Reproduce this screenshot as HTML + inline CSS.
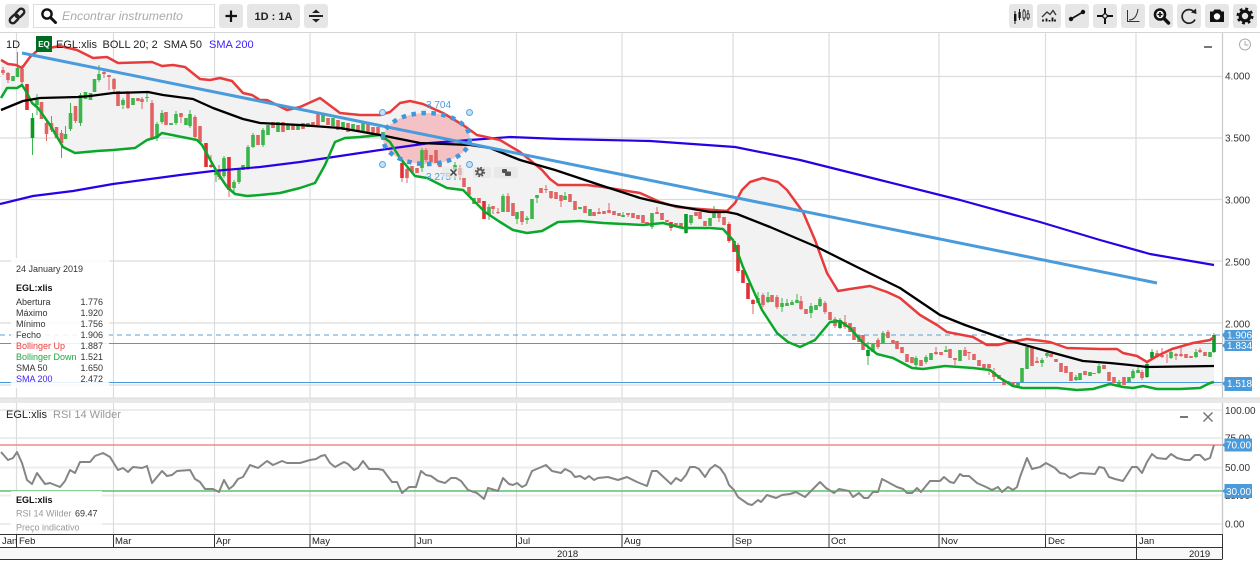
<!DOCTYPE html>
<html>
<head>
<meta charset="utf-8">
<title>EGL:xlis</title>
<style>
html,body{margin:0;padding:0;background:#fff;width:1260px;height:561px;overflow:hidden}
svg{display:block;font-family:"Liberation Sans",sans-serif}
text{font-family:"Liberation Sans",sans-serif}
</style>
</head>
<body>
<svg width="1260" height="561" viewBox="0 0 1260 561" xmlns="http://www.w3.org/2000/svg">
<rect width="1260" height="561" fill="#fff"/>

<!-- toolbar -->
<g fill="#e6e6e6">
<rect x="5" y="4" width="24" height="24" rx="3"/>
<rect x="219" y="4" width="24" height="24" rx="3"/>
<rect x="247" y="4" width="53" height="24" rx="3"/>
<rect x="304" y="4" width="24" height="24" rx="3"/>
<rect x="1009" y="4" width="24" height="24" rx="3"/>
<rect x="1037" y="4" width="24" height="24" rx="3"/>
<rect x="1065" y="4" width="24" height="24" rx="3"/>
<rect x="1093" y="4" width="24" height="24" rx="3"/>
<rect x="1121" y="4" width="24" height="24" rx="3"/>
<rect x="1149" y="4" width="24" height="24" rx="3"/>
<rect x="1177" y="4" width="24" height="24" rx="3"/>
<rect x="1205" y="4" width="24" height="24" rx="3"/>
<rect x="1233" y="4" width="24" height="24" rx="3"/>
</g>
<rect x="33.5" y="4.5" width="181" height="23" fill="#fff" stroke="#ddd"/>
<rect x="0" y="32" width="1260" height="1" fill="#d5d5d5"/>

<!-- link icon -->
<g transform="rotate(-45 17 16)" fill="none" stroke="#222" stroke-width="2.400">
<rect x="8" y="13" width="10" height="6" rx="3"/>
<rect x="16" y="13" width="10" height="6" rx="3"/>
</g>
<!-- search -->
<circle cx="47" cy="14" r="4.6" fill="none" stroke="#111" stroke-width="2.4"/>
<path d="M50.5 17.5L55.5 22.5" stroke="#111" stroke-width="3" stroke-linecap="round"/>
<text x="62" y="20" font-size="12.3" font-style="italic" fill="#aaa">Encontrar instrumento</text>
<!-- plus -->
<path d="M231 10.5V22M225.5 16H237" stroke="#111" stroke-width="2.2" fill="none"/>
<text x="273.5" y="20" font-size="11" font-weight="bold" fill="#222" text-anchor="middle">1D : 1A</text>
<!-- split -->
<path d="M309 16H323" stroke="#222" stroke-width="2"/>
<path d="M312 13L316 9.5L320 13ZM312 19L316 22.5L320 19Z" fill="#222"/>

<!-- right icons -->
<g stroke="#111" fill="#111">
<path d="M1015 11V24M1019.5 9V20M1024 9V21M1028 10V20" stroke-width="1" fill="none"/>
<rect x="1014" y="14" width="2.4" height="7" stroke="none"/>
<rect x="1018.5" y="12" width="2.2" height="6" stroke="none"/>
<rect x="1023" y="11" width="2.2" height="7" fill="#fff" stroke-width=".8"/>
<rect x="1027" y="14" width="2.2" height="4" fill="#fff" stroke-width=".8"/>
</g>
<path d="M1042 17L1047 12L1050 14.5L1053 10.5L1056 15" fill="none" stroke="#333" stroke-width="1.3"/>
<path d="M1043 19.500V21.500M1046.500 18.500V21.500M1049.500 20V21.500M1052.500 17.500V21.500M1055 19.500V21.500" stroke="#111" stroke-width="1.8"/>
<path d="M1071 19L1083 12" stroke="#111" stroke-width="1.6"/>
<circle cx="1071" cy="19" r="2.2" fill="#111"/><circle cx="1083" cy="12" r="2.2" fill="#111"/>
<path d="M1105 8V13.500M1105 18.500V24M1097 16H1102.500M1107.500 16H1113" stroke="#111" stroke-width="2"/>
<circle cx="1105" cy="16" r="2.2" fill="none" stroke="#111" stroke-width="1.2"/>
<path d="M1127.500 10V21.500H1139.500" fill="none" stroke="#333" stroke-width="1"/>
<path d="M1129 20C1134 20 1137 16 1138 9" fill="none" stroke="#333" stroke-width="1"/>
<circle cx="1160" cy="14.500" r="5" fill="#fff" stroke="#111" stroke-width="2.6"/>
<path d="M1160 12V17M1157.500 14.500H1162.500" stroke="#111" stroke-width="1.6"/>
<path d="M1164 18.500L1168.500 23" stroke="#111" stroke-width="3.4" stroke-linecap="round"/>
<path d="M1194.500 12.500A6.800 6.800 0 1 0 1195 19.500" fill="none" stroke="#222" stroke-width="1.7"/>
<path d="M1191 12.500L1196 8.500L1196.500 14Z" fill="#222"/>
<path d="M1210 11.500H1213L1214.500 9.500H1220L1221.500 11.500H1224V22H1210Z" fill="#111"/>
<circle cx="1217" cy="16.500" r="3.200" fill="#fff"/>
<circle cx="1245" cy="16" r="4.800" fill="none" stroke="#111" stroke-width="3.200"/>
<circle cx="1245" cy="16" r="7" fill="none" stroke="#111" stroke-width="3" stroke-dasharray="2.750 2.750"/>

<!-- main grid -->
<g stroke="#dcdcdc" stroke-width="1.2" fill="none">
<path d="M0 76.500H1222M0 138H1222M0 199.500H1222M0 261H1222M0 323H1222M0 385H1222"/>
<path d="M16.500 33V398M113.500 33V398M214.500 33V398M310 33V398M415 33V398M516.500 33V398M622 33V398M733 33V398M829 33V398M939 33V398M1045.500 33V398M1136 33V398"/>
</g>
<path d="M1222.500 33V534" stroke="#c8c8c8" stroke-width="1.200"/>

<!-- band fill -->
<polygon fill="#f2f2f2" points="1,60 8,64 16,65 22,68 30,57 38,50 60,46 77,50 93,58 107,57 118,63 152,62 162,66 173,65 185,67 200,79 210,80 220,78 232,81 243,93 252,95 260,100 267,100 287,110 300,107 320,98 340,113 360,115 380,115 390,112 400,103 410,101 423,104 443,113 463,125 477,135 500,140 520,152 530,160 542,170 550,179 558,185 587,185 603,187 640,193 660,202 677,207 700,209 727,211 735,203 742,190 750,182 763,178 778,182 787,190 803,212 815,240 827,273 838,291 850,289 870,286 887,292 900,298 920,315 937,325 947,332 973,337 987,345 998,345 1010,342 1027,339 1050,342 1067,348 1100,349 1117,349 1123,353 1137,356 1147,362 1157,356 1172,349 1193,343 1210,340 1214,337 1214,382 1210,383 1200,388 1180,389 1157,389 1143,386 1133,388 1123,387 1110,384 1093,389 1077,390 1057,388 1023,388 1013,386 1000,378 990,370 973,368 945,366 923,369 912,368 893,358 877,354 863,343 850,328 840,321 830,322 815,340 800,347 788,342 777,333 762,310 743,267 733,240 723,229 710,228 683,228 663,223 643,225 603,223 580,221 558,222 542,231 527,233 513,230 500,222 485,212 470,197 463,190 447,188 427,178 415,176 400,158 390,142 380,135 360,137 345,138 335,142 325,165 315,183 300,188 280,193 260,195 247,196 235,194 227,187 217,172 202,145 197,140 177,136 162,133 157,137 147,140 135,148 113,150 97,151 75,153 63,147 50,125 38,108 32,103 27,93 22,85 17,88 7,88 1,98"/>

<!-- horizontal markers -->
<path d="M0 335H1222" stroke="#3f92d4" stroke-width="1" stroke-dasharray="5 4" opacity=".85"/>
<path d="M0 343.500H1222" stroke="#4a9bdc" stroke-width="1"/>
<path d="M0 382.500H1222" stroke="#4a9bdc" stroke-width="1"/>

<!-- ellipse fill -->
<ellipse cx="426.500" cy="138.500" rx="43.500" ry="25.500" fill="#f5b9bd" opacity=".85"/>

<!-- candle wicks -->
<path fill="none" stroke="#3cb54a" stroke-width="1" d="M17.500 52V77M32.500 113V155M37 94V115M65.500 126V139M70.500 103V131M80.500 93V126M99 65V82M123 98V109M147 93V102M157 122V141M162 110V124M176 111V125M190 110V128M216 168V182M224 156V178M234 180V194M239 168V184M248 145V170M253 133V148M263 128V147M422 148V172M455 162V180M489 204V220M503 194V212M517 212V224M527 216V224M537 195V203M565 192V200M623 212V217M652 213V229M686 214V234M691 215V225M714 206V218M758 292V303M768 292V303M782 298V312M787 299V306M792 300V305M797 294V303M811 303V318M820 297V307M840 318V329M868 342V365M883 331V344M916 356V367M926 355V364M946 346V352M1042 358V367M1047 350V358M1076 375V381M1099 364V374M1119 380V387M1133 369V379M1138 365V373M1147 362V378M1152 349V359M1171 350V359M1196 349V358M1214 333V353"/>
<path fill="none" stroke="#e06464" stroke-width="1" d="M3 67V75M8 72V83M22 65V84M46.500 119V141M51.500 116V132M61.500 130V158M75.500 106V123M104 70V78M109 75V90M114 78V93M128 91V109M142 97V109M152 100V140M181 113V123M195 115V139M211 155V168M219 165V180M229 157V197M402 160V182M407 165V183M426 148V162M460 165V180M493 206V214M498 208V214M508 193V212M522 211V225M546 185V193M551 191V199M561 195V207M599 208V214M609 203V213M628 213V217M657 207V214M671 222V231M719 212V222M729 222V243M738 243V273M753 299V314M763 293V307M777 295V309M801 296V310M825 301V314M835 317V328M845 315V329M878 338V349M888 330V338M936 347V355M955 358V365M965 347V356M969 352V360M989 364V375M994 368V381M1037 357V363M1142 370V380M1157 350V358M1162 348V358M1167 354V363M1176 353V360M1181 346V357M1200 348V353"/>

<!-- candle bodies -->
<path fill="none" stroke="#e06464" stroke-width="3.600" d="M3 70V73M8 73V80M22 69V82M41.500 102V119M46.500 123V134M51.500 123V130M56.500 127V138M61.500 133V143M75.500 106V121M104 72V74M109 75V77M114 79V89M118 91V106M128 93V108M138 98V101M142 99V102M152 103V138M166 112V125M181 113V117M195 117V137M200 126V142M219 170V177M258 135V145M273 122V128M283 122V132M293 125V130M303 123V129M313 122V127M318 112V125M328 118V125M338 120V130M348 123V132M358 125V132M368 122V132M373 127V133M378 127V135M407 169V178M412 166V172M417 168V173M426 150V160M431 155V162M436 150V163M440 162V167M460 168V175M464 178V187M469 187V195M479 198V203M493 206V209M498 212V213M508 196V212M513 203V216M522 211V222M541 188V193M546 189V190M551 191V198M556 192V199M561 195V201M570 194V202M575 201V210M585 206V213M594 212V216M599 212V214M604 211V214M609 210V213M614 211V215M619 213V216M628 213V215M633 213V218M638 215V219M643 215V223M647 222V225M657 212V214M662 213V220M667 220V222M676 223V225M681 223V227M696 212V216M700 212V219M705 221V226M719 213V218M724 217V225M763 295V305M772 295V302M777 297V307M801 301V309M806 309V314M825 303V312M830 312V320M835 319V326M845 322V327M850 323V332M854 327V340M859 335V342M863 335V350M878 340V347M888 332V338M893 340V343M897 341V349M902 347V353M907 354V362M912 357V363M921 360V366M936 352V354M941 352V355M950 349V358M955 358V360M965 350V356M969 352V353M974 354V360M979 360V366M984 364V368M989 364V368M994 372V377M999 375V379M1004 380V385M1008 381V383M1013 382V387M1032 347V366M1037 361V363M1051 354V357M1056 359V362M1061 363V372M1066 366V373M1071 372V381M1085 371V375M1094 373V374M1104 365V369M1109 372V381M1114 377V383M1124 377V385M1142 372V378M1157 353V357M1162 355V357M1176 354V356M1181 354V356M1186 354V358M1191 356V358M1200 350V352M1205 352V356"/>
<path fill="none" stroke="#e22f34" stroke-width="3.600" d="M27 84V110M206 143V167M211 165V167M229 157V190M402 163V178M484 201V219M671 222V228M729 224V241M734 241V252M738 245V271M743 270V283M748 283V299M753 300V304"/>
<path fill="none" stroke="#3cb54a" stroke-width="3.600" d="M13 76V81M17.500 68V77M37 100V105M65.500 134V139M70.500 113V129M80.500 95V123M85.500 92V99M90.500 93V100M94.500 79V92M99 74V80M123 100V105M133 98V105M147 97V98M157 124V138M162 113V122M171 123V125M176 114V123M186 118V125M190 114V126M216 170V175M224 158V176M234 182V188M239 170V182M243 165V170M248 147V168M253 135V147M263 130V145M268 125V135M278 122V132M288 124V130M298 124V130M308 123V127M323 115V122M333 118V126M343 122V130M353 124V130M363 123V131M383 132V140M422 150V168M455 165V170M474 198V204M489 207V215M503 196V212M517 212V219M527 218V220M532 199V219M537 195V198M565 196V200M580 207V209M590 209V216M623 215V217M652 213V227M662 213V214M691 215V223M710 218V226M714 213V218M758 298V303M768 297V302M782 303V307M787 303V306M792 302V305M797 300V303M811 306V313M816 305V310M820 299V306M873 343V352M883 333V343M916 358V365M926 357V362M931 353V360M946 350V352M960 350V361M1018 383V387M1022 368V382M1027 347V369M1042 360V363M1047 353V356M1076 377V380M1080 373V380M1090 372V376M1099 366V373M1119 382V386M1129 377V382M1133 371V378M1138 370V373M1171 352V358M1196 352V357M1210 352V357"/>
<path fill="none" stroke="#0a9a28" stroke-width="3.600" d="M32.500 118V138M686 214V233M840 320V328M868 350V356M1147 364V377M1152 352V358M1214 335V352"/>

<!-- indicators -->
<polyline fill="none" stroke="#2a00e6" stroke-width="2.200" stroke-linejoin="round" points="0,204 33,196 73,191 113,184 180,175 213,171 260,167 300,162 380,150 430,143 470,140 510,137 560,139 650,141 735,147 800,160 880,180 960,200 1040,222 1100,240 1150,254 1214,265"/>
<polyline fill="none" stroke="#0aa82a" stroke-width="2.500" stroke-linejoin="round" points="1,98 7,88 17,88 22,85 27,93 32,103 38,108 50,125 63,147 75,153 97,151 113,150 135,148 147,140 157,137 162,133 177,136 197,140 202,145 217,172 227,187 235,194 247,196 260,195 280,193 300,188 315,183 325,165 335,142 345,138 360,137 380,135 390,142 400,158 415,176 427,178 447,188 463,190 470,197 485,212 500,222 513,230 527,233 542,231 558,222 580,221 603,223 643,225 663,223 683,228 710,228 723,229 733,240 743,267 762,310 777,333 788,342 800,347 815,340 830,322 840,321 850,328 863,343 877,354 893,358 912,368 923,369 945,366 973,368 990,370 1000,378 1013,386 1023,388 1057,388 1077,390 1093,389 1110,384 1123,387 1133,388 1143,386 1157,389 1180,389 1200,388 1210,383 1214,382"/>
<polyline fill="none" stroke="#e83c3c" stroke-width="2.500" stroke-linejoin="round" points="1,60 8,64 16,65 22,68 30,57 38,50 60,46 77,50 93,58 107,57 118,63 152,62 162,66 173,65 185,67 200,79 210,80 220,78 232,81 243,93 252,95 260,100 267,100 287,110 300,107 320,98 340,113 360,115 380,115 390,112 400,103 410,101 423,104 443,113 463,125 477,135 500,140 520,152 530,160 542,170 550,179 558,185 587,185 603,187 640,193 660,202 677,207 700,209 727,211 735,203 742,190 750,182 763,178 778,182 787,190 803,212 815,240 827,273 838,291 850,289 870,286 887,292 900,298 920,315 937,325 947,332 973,337 987,345 998,345 1010,342 1027,339 1050,342 1067,348 1100,349 1117,349 1123,353 1137,356 1147,362 1157,356 1172,349 1193,343 1210,340 1214,337"/>
<polyline fill="none" stroke="#000" stroke-width="2.300" stroke-linejoin="round" points="1,110 23,101 40,98 78,97 90,96 113,93 148,92 163,95 193,99 213,108 243,119 260,123 300,125 340,128 380,135 420,143 470,145 490,148 520,160 555,170 603,186 640,198 670,205 710,212 727,212 737,214 770,227 817,247 857,267 900,288 940,315 965,325 1007,340 1050,352 1083,361 1110,363 1130,365 1147,367 1214,366"/>

<!-- trend line -->
<path d="M22 53L1157 283" stroke="#4a9bdc" stroke-width="3" fill="none"/>

<!-- ellipse outline + handles -->
<ellipse cx="426.500" cy="138.500" rx="43.500" ry="25.500" fill="none" stroke="#3f97dc" stroke-width="4.500" stroke-dasharray="4.500 5.500"/>
<g fill="#c5e1f7" stroke="#5aa5e0" stroke-width="1">
<circle cx="382.500" cy="112.500" r="3"/><circle cx="469.500" cy="112.500" r="3"/>
<circle cx="382.500" cy="164.500" r="3"/><circle cx="469.500" cy="164.500" r="3"/>
</g>
<text x="426" y="108" font-size="10" fill="#4a9bdc">3.704</text>
<text x="426" y="180" font-size="10" fill="#4a9bdc">3.275</text>
<rect x="442" y="167" width="22" height="11" rx="2" fill="#e6e6e6" opacity=".6"/>
<rect x="473" y="167" width="18" height="11" rx="2" fill="#e6e6e6" opacity=".8"/>
<rect x="494" y="167" width="24" height="11" rx="2" fill="#e6e6e6" opacity=".8"/>
<path d="M450.500 169.500L456.500 175.500M456.500 169.500L450.500 175.500" stroke="#444" stroke-width="1.500"/>
<circle cx="480" cy="172" r="2.600" fill="none" stroke="#555" stroke-width="2"/>
<circle cx="480" cy="172" r="4.300" fill="none" stroke="#555" stroke-width="1.600" stroke-dasharray="1.700 1.700"/>
<rect x="502" y="169" width="5" height="4" rx="1" fill="#555"/>
<rect x="505" y="171.500" width="6" height="4.500" rx="1" fill="#555"/>

<!-- header -->
<text x="6" y="48" font-size="11" fill="#222">1D</text>
<rect x="36" y="36" width="16" height="16" fill="#006b21"/>
<text x="44" y="47" font-size="8" font-weight="bold" fill="#fff" text-anchor="middle">EQ</text>
<text x="56" y="48" font-size="11" fill="#222">EGL:xlis</text>
<text x="102.500" y="48" font-size="11" fill="#222">BOLL 20; 2</text>
<text x="163.500" y="48" font-size="11" fill="#222">SMA 50</text>
<text x="209" y="48" font-size="11" fill="#3a1cff">SMA 200</text>

<!-- minus, clock -->
<rect x="1204" y="46" width="8" height="2" fill="#777"/>
<circle cx="1245" cy="44.500" r="5.500" fill="none" stroke="#aaa" stroke-width="1"/>
<path d="M1245 41V45H1248.500" fill="none" stroke="#aaa" stroke-width="1"/>

<!-- info panel -->
<rect x="11" y="258" width="98" height="130" fill="#fff" fill-opacity=".87"/>
<g font-size="9" fill="#333">
<text x="16" y="272">24 January 2019</text>
<text x="16" y="291" font-weight="bold" fill="#111">EGL:xlis</text>
<text x="16" y="305">Abertura</text>
<text x="16" y="316">Máximo</text>
<text x="16" y="327">Mínimo</text>
<text x="16" y="338">Fecho</text>
<text x="16" y="349" fill="#e83c3c">Bollinger Up</text>
<text x="16" y="360" fill="#1fa83a">Bollinger Down</text>
<text x="16" y="371">SMA 50</text>
<text x="16" y="382" fill="#3a1cff">SMA 200</text>
<g text-anchor="end">
<text x="103" y="305">1.776</text>
<text x="103" y="316">1.920</text>
<text x="103" y="327">1.756</text>
<text x="103" y="338">1.906</text>
<text x="103" y="349">1.887</text>
<text x="103" y="360">1.521</text>
<text x="103" y="371">1.650</text>
<text x="103" y="382">2.472</text>
</g>
</g>

<!-- price axis -->
<g font-size="10" fill="#333">
<text x="1225" y="79.500">4.000</text>
<text x="1225" y="141.500">3.500</text>
<text x="1225" y="203.500">3.000</text>
<text x="1225" y="265.500">2.500</text>
<text x="1225" y="327.500">2.000</text>
</g>
<path d="M1222 335L1224.500 332V330H1252V340H1224.500V338Z" fill="#4a9bdc"/>
<path d="M1222 345.500L1224.500 343V340.500H1252V351H1224.500V348Z" fill="#4a9bdc"/>
<path d="M1222 383.500L1224.500 381V377H1252V391H1224.500V386Z" fill="#4a9bdc"/>
<g font-size="10" fill="#fff">
<text x="1227" y="338.500">1.906</text>
<text x="1227" y="349">1.834</text>
<text x="1227" y="387">1.518</text>
</g>

<!-- divider -->
<rect x="0" y="398" width="1260" height="5" fill="#e8e8e8"/>
<path d="M0 398H1260" stroke="#ddd" stroke-width="1"/>

<!-- RSI panel -->
<g stroke="#ededed" stroke-width="2" fill="none">
<path d="M0 410H1222M0 438H1222M0 467.500H1222M0 495.500H1222M0 524H1222"/>
</g>
<g stroke="#dcdcdc" stroke-width="1.200" fill="none">
<path d="M16.500 403V534M113.500 403V534M214.500 403V534M310 403V534M415 403V534M516.500 403V534M622 403V534M733 403V534M829 403V534M939 403V534M1045.500 403V534M1136 403V534"/>
</g>
<path d="M1222.500 403V534" stroke="#c8c8c8" stroke-width="1.200"/>
<path d="M0 445H1222" stroke="#f08a8a" stroke-width="1.600"/>
<path d="M0 491H1222" stroke="#5cc46a" stroke-width="1.600"/>
<polyline fill="none" stroke="#858585" stroke-width="2" stroke-linejoin="round" points="1,452 8,460 13,458 17,452 22,463 27,480 32,484 37,473 45,484 50,483 60,487 65,481 70,470 75,473 80,462 90,462 95,456 103,453 110,457 118,470 123,468 128,472 133,467 142,468 147,466 152,483 162,471 167,476 172,475 177,471 190,470 195,479 200,482 205,489 213,489 219,492 224,480 229,489 233,486 238,479 243,477 250,465 258,468 267,461 273,465 282,461 287,463 300,463 310,460 316,459 321,456 325,455 330,463 335,467 344,462 348,464 354,470 358,468 363,461 369,469 378,469 383,470 392,482 397,482 402,493 409,487 416,487 421,471 426,475 431,476 438,481 445,483 451,478 456,478 461,481 468,490 477,493 484,499 488,488 498,491 503,478 509,484 513,485 517,483 522,487 526,485 532,471 546,465 552,471 561,473 565,469 571,472 575,477 580,476 585,479 589,476 594,480 598,478 608,477 618,480 627,477 637,482 647,486 652,471 657,471 671,484 676,478 681,481 686,475 690,467 695,467 699,469 705,477 710,469 715,465 720,468 725,475 729,485 734,490 738,497 748,504 752,505 758,500 761,502 767,495 776,498 782,495 790,494 796,492 805,497 820,482 826,488 834,493 839,489 849,491 853,497 859,493 864,498 868,498 873,492 878,492 882,479 897,487 903,489 907,493 912,493 917,488 921,492 930,481 940,481 944,477 950,482 954,483 960,474 963,476 969,476 977,483 986,487 992,490 998,487 1002,492 1008,487 1013,490 1017,487 1020,477 1027,458 1032,469 1040,467 1046,463 1055,468 1060,473 1065,474 1070,478 1080,473 1095,474 1099,467 1104,468 1109,477 1115,479 1123,481 1132,467 1137,467 1142,473 1147,462 1152,454 1157,458 1166,459 1171,454 1177,458 1185,460 1190,460 1195,455 1200,455 1205,460 1210,458 1214,445"/>
<text x="6" y="418" font-size="11" fill="#222">EGL:xlis</text>
<text x="53" y="418" font-size="11" fill="#999">RSI 14 Wilder</text>
<rect x="11" y="491" width="91" height="42" fill="#fff" fill-opacity=".85"/>
<text x="16" y="503" font-size="9" font-weight="bold" fill="#111">EGL:xlis</text>
<text x="16" y="516.500" font-size="9" fill="#999">RSI 14 Wilder</text>
<text x="75" y="516.500" font-size="9" fill="#333">69.47</text>
<text x="16" y="530.500" font-size="9" fill="#999">Preço indicativo</text>
<rect x="1180" y="416" width="8" height="2" fill="#777"/>
<path d="M1203.500 412.500L1212.500 421.500M1212.500 412.500L1203.500 421.500" stroke="#777" stroke-width="1.500"/>
<g font-size="10" fill="#333">
<text x="1225" y="414">100.00</text>
<text x="1225" y="441.500">75.00</text>
<text x="1225" y="471">50.00</text>
<text x="1225" y="499">25.00</text>
<text x="1225" y="527.500">0.00</text>
</g>
<path d="M1222 445L1224.500 443V438.500H1252V451.500H1224.500V447Z" fill="#4a9bdc"/>
<path d="M1222 491L1224.500 489V484H1252V498H1224.500V493Z" fill="#4a9bdc"/>
<g font-size="10" fill="#fff">
<text x="1226" y="448.500">70.00</text>
<text x="1226" y="495">30.00</text>
</g>

<!-- time axis -->
<rect x="0" y="548" width="1222" height="11" fill="#f8f8f8"/>
<path d="M0 534.500H1222.500M0 547.500H1222.500M0 559.500H1222.500" stroke="#333" stroke-width="1" fill="none"/>
<path d="M16.500 534V548M113.500 534V548M214.500 534V548M310 534V548M415 534V548M516.500 534V548M622 534V548M733 534V548M829 534V548M939 534V548M1045.500 534V548M1136.500 534V559M1222.500 534V559" stroke="#333" stroke-width="1" fill="none"/>
<g font-size="9.500" fill="#222">
<text x="2" y="544">Jan</text>
<text x="19" y="544">Feb</text>
<text x="115" y="544">Mar</text>
<text x="216" y="544">Apr</text>
<text x="312" y="544">May</text>
<text x="417" y="544">Jun</text>
<text x="518" y="544">Jul</text>
<text x="624" y="544">Aug</text>
<text x="735" y="544">Sep</text>
<text x="831" y="544">Oct</text>
<text x="941" y="544">Nov</text>
<text x="1048" y="544">Dec</text>
<text x="1139" y="544">Jan</text>
<text x="557" y="557">2018</text>
<text x="1189" y="557">2019</text>
</g>
</svg>
</body>
</html>
